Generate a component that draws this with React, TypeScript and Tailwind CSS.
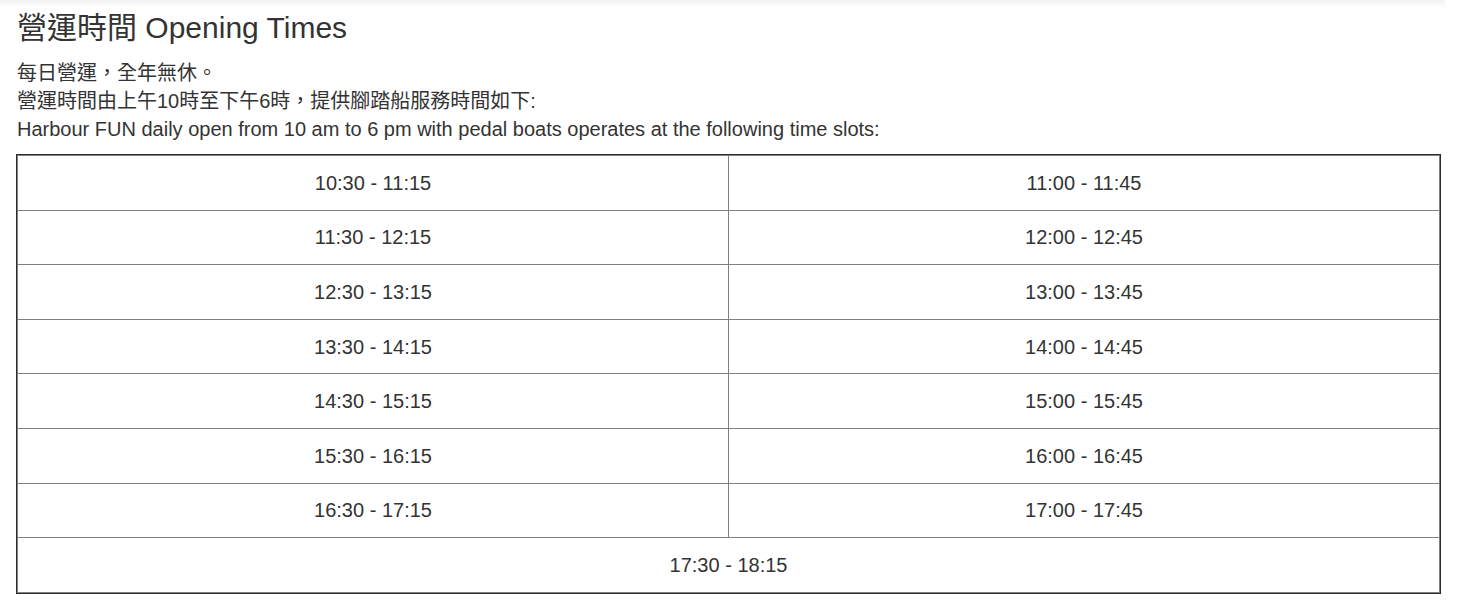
import React from "react";

const slots: [string, string][] = [
  ["10:30 - 11:15", "11:00 - 11:45"],
  ["11:30 - 12:15", "12:00 - 12:45"],
  ["12:30 - 13:15", "13:00 - 13:45"],
  ["13:30 - 14:15", "14:00 - 14:45"],
  ["14:30 - 15:15", "15:00 - 15:45"],
  ["15:30 - 16:15", "16:00 - 16:45"],
  ["16:30 - 17:15", "17:00 - 17:45"],
];

const Cell: React.FC<{ children: React.ReactNode; wide?: boolean }> = ({ children, wide }) => (
  <div
    className={`flex items-center justify-center h-[55.6px] border border-[#808080] -mt-px -ml-px ${
      wide ? "col-span-2" : ""
    }`}
  >
    {children}
  </div>
);

export default function App() {
  return (
    <div className="bg-white min-h-screen text-[#333] font-['Liberation_Sans','Noto_Sans_CJK_TC',sans-serif]">
      <div className="w-[1445px] h-[8px] bg-gradient-to-b from-[#f2f2f2] to-white" />
      <div className="pl-[17px] w-[1441px]">
        <h1 className="text-[30px] leading-[33px] mt-[3px]">營運時間 Opening Times</h1>
        <div className="mt-[15px] text-[20px] leading-[28px]">
          <p>每日營運，全年無休。</p>
          <p>營運時間由上午10時至下午6時，提供腳踏船服務時間如下:</p>
          <p>Harbour FUN daily open from 10 am to 6 pm with pedal boats operates at the following time slots:</p>
        </div>
      </div>
      <div className="ml-[16px] mt-[11px] w-[1425px] border border-[#2b2b2b]">
        <div className="grid grid-cols-2 pl-px pt-px text-[20px]">
          {slots.map(([a, b]) => (
            <React.Fragment key={a}>
              <Cell>{a}</Cell>
              <Cell>{b}</Cell>
            </React.Fragment>
          ))}
          <Cell wide>17:30 - 18:15</Cell>
        </div>
      </div>
    </div>
  );
}
